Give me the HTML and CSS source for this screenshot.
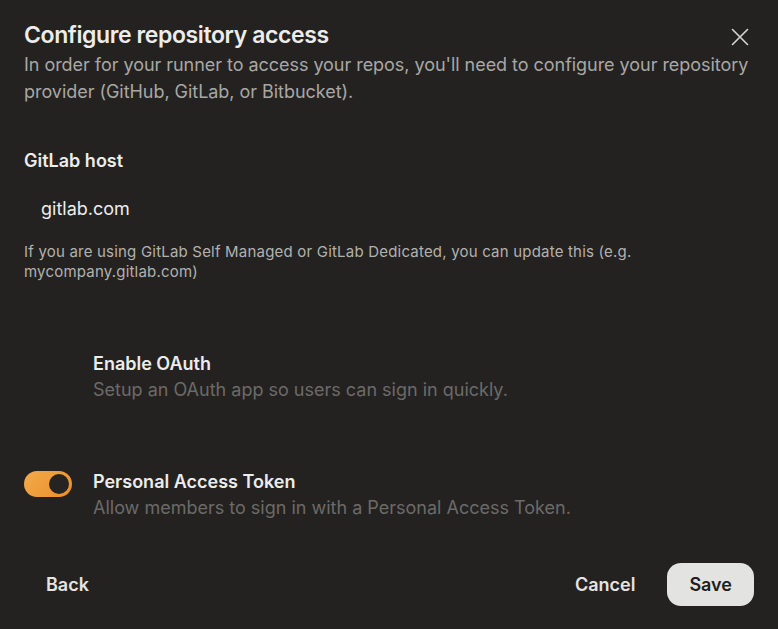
FILE: index.html
```html
<!DOCTYPE html>
<html>
<head>
<meta charset="utf-8">
<link rel="stylesheet" href="styles.css">
</head>
<body>
<div class="dialog">
  <div class="header">
    <h1 class="title">Configure repository access</h1>
    <button class="close" aria-label="Close">
      <svg width="18" height="18" viewBox="0 0 18 18"><path d="M1.5 1.5L16.5 16.5M16.5 1.5L1.5 16.5" stroke="#d6d4d1" stroke-width="1.6" stroke-linecap="round"/></svg>
    </button>
  </div>
  <p class="desc">In order for your runner to access your repos, you'll need to configure your repository provider (GitHub, GitLab, or Bitbucket).</p>

  <div class="field">
    <label class="label">GitLab host</label>
    <div class="input">gitlab.com</div>
    <p class="help">If you are using GitLab Self Managed or GitLab Dedicated, you can update this (e.g. mycompany.gitlab.com)</p>
  </div>

  <div class="option">
    <div class="toggle-slot"></div>
    <div class="opt-text">
      <div class="opt-title">Enable OAuth</div>
      <div class="opt-sub">Setup an OAuth app so users can sign in quickly.</div>
    </div>
  </div>

  <div class="option option-pat">
    <div class="toggle-slot"><span class="toggle"><span class="knob"></span></span></div>
    <div class="opt-text">
      <div class="opt-title">Personal Access Token</div>
      <div class="opt-sub">Allow members to sign in with a Personal Access Token.</div>
    </div>
  </div>

  <div class="footer">
    <button class="btn btn-ghost">Back</button>
    <div class="right">
      <button class="btn btn-ghost">Cancel</button>
      <button class="btn btn-primary">Save</button>
    </div>
  </div>
</div>
</body>
</html>
```

FILE: styles.css
```css
html, body {
  margin: 0;
  padding: 0;
  background: #232221;
  height: 100%;
}
body {
  font-family: Inter, "Noto Sans", sans-serif;
  color: #e8e6e3;
}
.dialog {
  width: 778px;
  height: 629px;
  box-sizing: border-box;
  padding: 19px 24px 0 24px;
}
.header {
  display: flex;
  justify-content: space-between;
  align-items: center;
}
.title {
  margin: 0;
  font-size: 23px;
  font-weight: 600;
  line-height: 32px;
  color: #ececea;
  letter-spacing: -0.4px;
}
.close {
  background: none;
  border: none;
  padding: 0;
  margin-right: 5px;
  margin-top: 3px;
  width: 18px;
  height: 18px;
  display: flex;
}
.desc {
  margin: 0;
  font-size: 18px;
  line-height: 27px;
  color: #a9a7a4;
  letter-spacing: -0.04px;
}
.field {
  margin-top: 44px;
}
.label {
  display: block;
  font-size: 18px;
  font-weight: 600;
  line-height: 24px;
  color: #ececea;
}
.input {
  margin-top: 24px;
  padding-left: 17px;
  font-size: 18px;
  line-height: 24px;
  color: #eeeeec;
}
.help {
  margin: 21px 0 0 0;
  font-size: 15px;
  line-height: 20px;
  color: #b3b1ae;
  letter-spacing: 0.2px;
}
.option {
  display: flex;
  align-items: flex-start;
  margin-top: 70px;
}
.option-pat {
  margin-top: 68px;
}
.toggle-slot {
  width: 69px;
  flex: none;
  padding-top: 1px;
}
.toggle {
  display: flex;
  align-items: center;
  justify-content: flex-end;
  width: 48px;
  height: 26px;
  box-sizing: border-box;
  padding: 3px;
  border-radius: 13px;
  background: linear-gradient(135deg, #f4aa4a, #e88f2a);
}
.knob {
  width: 20px;
  height: 20px;
  border-radius: 50%;
  background: #262422;
}
.opt-title {
  font-size: 18px;
  font-weight: 600;
  line-height: 24px;
  color: #ececea;
}
.opt-sub {
  margin-top: 2px;
  font-size: 18px;
  line-height: 24px;
  color: #6c6a67;
}
.footer {
  display: flex;
  justify-content: space-between;
  align-items: center;
  margin-top: 43px;
}
.right {
  display: flex;
  align-items: center;
  gap: 10px;
}
.btn {
  font-family: Inter, "Noto Sans", sans-serif;
  font-size: 18px;
  font-weight: 600;
  border: none;
  height: 43px;
  padding: 0 22px;
  border-radius: 14px;
  cursor: pointer;
}
.btn-ghost {
  background: transparent;
  color: #e6e4e1;
}
.btn-primary {
  background: #e3e3e2;
  color: #1f1e1d;
}
```
